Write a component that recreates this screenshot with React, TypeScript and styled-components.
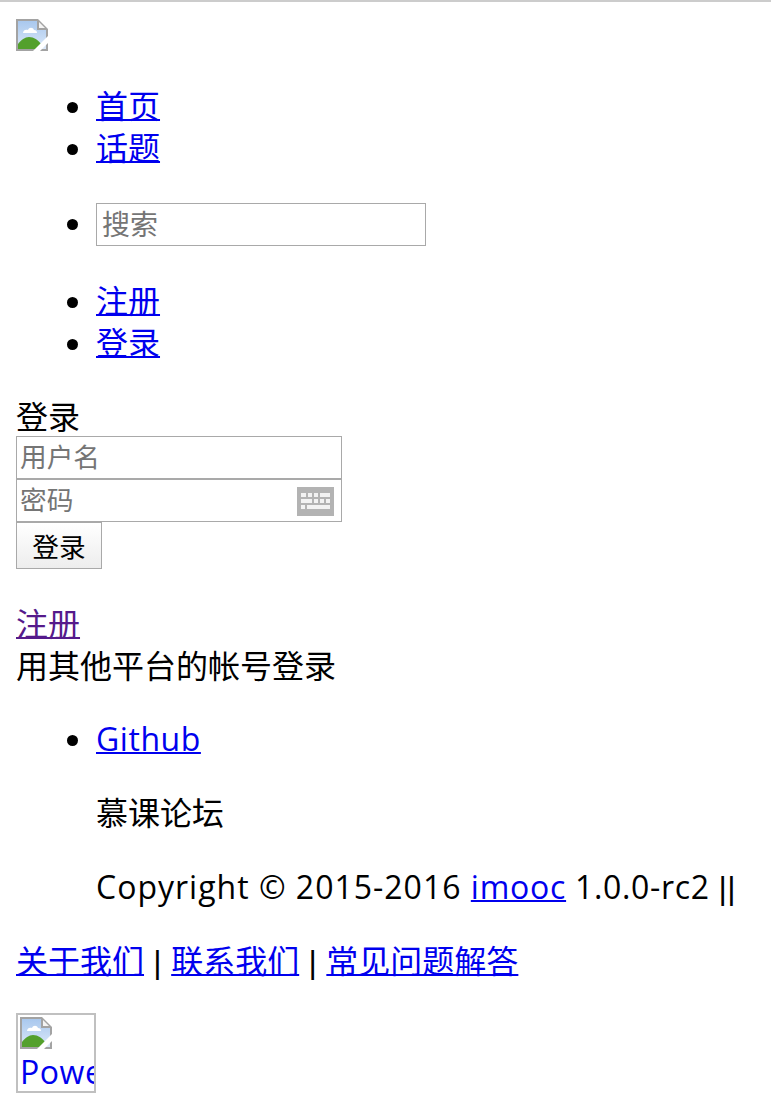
import React from 'react';
import styled, { createGlobalStyle } from 'styled-components';

const GlobalStyle = createGlobalStyle`
  html, body {
    margin: 0;
    padding: 0;
    background: #fff;
  }
  body {
    font-family: "Open Sans", "Noto Sans CJK SC", sans-serif;
    font-size: 32px;
    line-height: 42px;
    color: #000;
  }
`;

const Page = styled.div`
  border-top: 2px solid #ccc;
  padding: 17px 16px 0;
  height: 1099px;
  overflow: hidden;
`;

const LogoRow = styled.div`
  height: 32px;
  display: flex;
`;

const NavList = styled.ul`
  margin: 34px 0 0;
  padding-left: 80px;
`;

const NavItem = styled.li`
  height: 42px;
`;

const SearchItem = styled.li`
  height: 43px;
  margin-top: 34px;
  line-height: 30px;
`;

const Anchor = styled.a<{ $visited?: boolean }>`
  color: ${({ $visited }) => ($visited ? '#551a8b' : '#0000ee')};
  text-decoration: underline;
  text-decoration-thickness: 2px;
  cursor: pointer;
`;

const Latin = styled.span<{ $spacing?: number }>`
  letter-spacing: ${({ $spacing }) => $spacing ?? 0.55}px;
`;

const Separator = styled.span`
  font-family: "Liberation Sans", sans-serif;
  letter-spacing: 0.35px;
`;

const Field = styled.input<{ $width: number; $size?: number; $left?: number }>`
  display: block;
  box-sizing: border-box;
  width: ${({ $width }) => $width}px;
  height: 43px;
  margin: 0;
  padding: 0 2px 4px ${({ $left }) => $left ?? 3}px;
  border: 1px solid #a9a9a9;
  border-radius: 0;
  outline: none;
  background: #fff;
  font-family: "Noto Sans CJK SC", sans-serif;
  font-size: ${({ $size }) => $size ?? 26.67}px;
  &::placeholder {
    color: #757575;
    opacity: 1;
  }
`;

const Block = styled.div`
  height: 42px;
`;

const LoginBlock = styled.div`
  margin-top: 32px;
`;

const LoginTitle = styled.div`
  height: 40px;
`;

const PasswordWrap = styled.div`
  position: relative;
  width: 326px;
`;

const KeyboardBadge = styled.svg`
  position: absolute;
  top: 8px;
  right: 8px;
  width: 37px;
  height: 29px;
`;

const SubmitButton = styled.button`
  display: block;
  box-sizing: border-box;
  width: 86px;
  height: 47px;
  margin: 0;
  padding: 0;
  border: 1px solid #a9a9a9;
  background: linear-gradient(#fff, #ededed);
  color: #000;
  font-family: "Noto Sans CJK SC", sans-serif;
  font-size: 26.67px;
`;

const RegisterBlock = styled.div`
  margin-top: 34px;
`;

const SocialList = styled.ul`
  margin: 31px 0 0;
  padding-left: 80px;
  white-space: nowrap;
`;

const FooterText = styled.p`
  margin: 32px 0 0;
  height: 42px;
  white-space: nowrap;
`;

const PoweredBox = styled.div`
  box-sizing: border-box;
  width: 80px;
  height: 80px;
  margin-top: 31px;
  border: 2px solid #c0c0c0;
  padding: 2px;
  overflow: hidden;
  color: #0000ee;
  line-height: 46px;
  white-space: nowrap;
`;

const BrokenIconSvg = styled.svg`
  display: block;
  width: 32px;
  height: 32px;
`;

const BrokenImage = () => (
  <BrokenIconSvg viewBox="0 0 32 32">
    <defs>
      <linearGradient id="sky" x1="0" y1="0" x2="0" y2="1">
        <stop offset="0" stopColor="#a9c8ee" />
        <stop offset="1" stopColor="#dbe8f8" />
      </linearGradient>
    </defs>
    <path d="M0 0H22L32 10V32H0Z" fill="#a3a3a3" />
    <path d="M2 2H21V11H30V30H2Z" fill="url(#sky)" />
    <path d="M23 3L29 9H23Z" fill="#f4f4f4" />
    <path d="M7 14c0-3 3-4 5-3 1-3 5-3 6 0 2 0 3 1 3 3Z" fill="#fff" />
    <path d="M2 30v-5c3-4 7-7 11-7 5 0 9 3 12 7l-5 5Z" fill="#53a02c" />
    <path d="M17 32L32 17V24L24 32Z" fill="#fff" />
  </BrokenIconSvg>
);

const KeyboardIcon = () => (
  <KeyboardBadge viewBox="0 0 37 29">
    <rect width="37" height="29" fill="#b3b3b3" />
    <g fill="#f2f2f2">
      <rect x="4" y="6" width="5" height="4" />
      <rect x="11" y="6" width="4" height="4" />
      <rect x="17" y="6" width="4" height="4" />
      <rect x="23" y="6" width="10" height="4" />
      <rect x="4" y="12" width="11" height="4" />
      <rect x="17" y="12" width="4" height="4" />
      <rect x="23" y="12" width="4" height="4" />
      <rect x="29" y="12" width="4" height="4" />
      <rect x="4" y="18" width="4" height="4" />
      <rect x="10" y="18" width="23" height="4" />
    </g>
  </KeyboardBadge>
);

const App: React.FC = () => (
  <>
    <GlobalStyle />
    <Page>
      <LogoRow>
        <BrokenImage />
      </LogoRow>
      <NavList>
        <NavItem>
          <Anchor>首页</Anchor>
        </NavItem>
        <NavItem>
          <Anchor>话题</Anchor>
        </NavItem>
        <SearchItem>
          <Field $width={330} $size={28} $left={5} placeholder="搜索" />
        </SearchItem>
      </NavList>
      <NavList>
        <NavItem>
          <Anchor>注册</Anchor>
        </NavItem>
        <NavItem>
          <Anchor>登录</Anchor>
        </NavItem>
      </NavList>
      <LoginBlock>
        <LoginTitle>登录</LoginTitle>
        <Field $width={326} placeholder="用户名" />
        <PasswordWrap>
          <Field $width={326} placeholder="密码" />
          <KeyboardIcon />
        </PasswordWrap>
        <SubmitButton>登录</SubmitButton>
      </LoginBlock>
      <RegisterBlock>
        <Block>
          <Anchor $visited>注册</Anchor>
        </Block>
        <Block>用其他平台的帐号登录</Block>
      </RegisterBlock>
      <SocialList>
        <li>
          <Anchor>
            <Latin>Github</Latin>
          </Anchor>
          <FooterText>慕课论坛</FooterText>
          <FooterText>
            <Latin $spacing={1}>Copyright © 2015-2016 </Latin>
            <Anchor>
              <Latin $spacing={0.75}>imooc</Latin>
            </Anchor>
            <Latin $spacing={0.65}> 1.0.0-rc2 </Latin>
            <Separator>||</Separator>
          </FooterText>
        </li>
      </SocialList>
      <FooterText>
        <Anchor>关于我们</Anchor>
        <Separator> | </Separator>
        <Anchor>联系我们</Anchor>
        <Separator> | </Separator>
        <Anchor>常见问题解答</Anchor>
      </FooterText>
      <PoweredBox>
        <BrokenImage />
        <Latin>Powered</Latin>
      </PoweredBox>
    </Page>
  </>
);

export default App;
